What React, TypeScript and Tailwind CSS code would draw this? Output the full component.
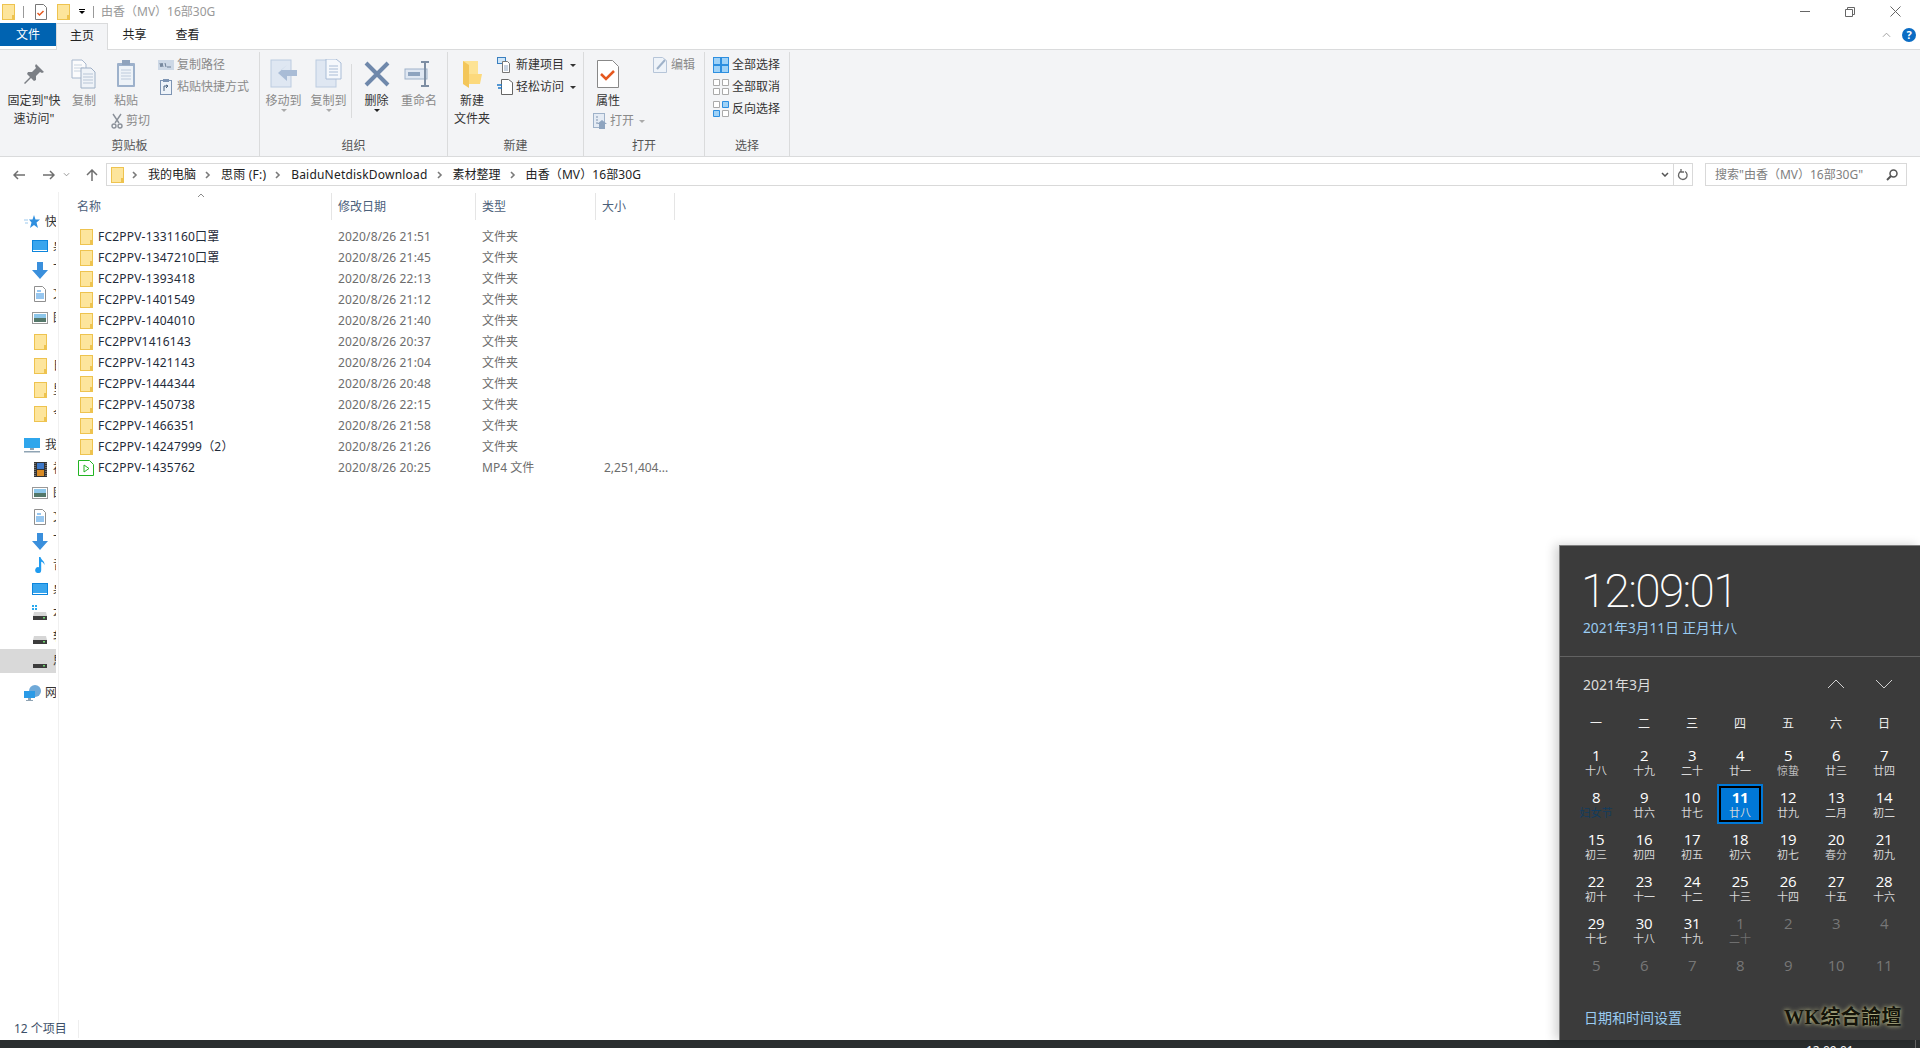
// App.tsx
import React from 'react';

const FONT = 'font-["Noto_Sans","Noto_Sans_CJK_SC",sans-serif]';

function Folder({ className = 'w-[13px] h-[16px] shrink-0' }: { className?: string }) {
  return (
    <svg viewBox="0 0 13 16" className={className}>
      <rect x="0.5" y="0.5" width="12" height="15" fill="#fde59c" stroke="#eec34f" />
      <rect x="10" y="11" width="3" height="5" fill="#eec34f" />
    </svg>
  );
}

function Chevron() {
  return (
    <svg viewBox="0 0 6 8" className="w-[6px] h-[8px] mx-[3px] shrink-0">
      <path d="M1 1l3 3-3 3" fill="none" stroke="#7a7a7a" strokeWidth="1.6" />
    </svg>
  );
}

function BigButton({ icon, lines, width, gray, caret, darkCaret }: { icon: React.ReactNode; lines: string[]; width: number; gray?: boolean; caret?: boolean; darkCaret?: boolean }) {
  return (
    <div className="flex flex-col items-center shrink-0" style={{ width }}>
      <div className="h-[34px] flex items-center justify-center">{icon}</div>
      <div className={`mt-[1px] text-[12px] leading-[18px] text-center whitespace-nowrap ${gray ? 'text-[#8a8a8a]' : 'text-[#333]'}`}>
        {lines.map((l) => (
          <div key={l}>{l}</div>
        ))}
      </div>
      {caret && <div className={`w-0 h-0 border-x-[3px] border-x-transparent border-t-[3px] -mt-[1px] ${darkCaret ? 'border-t-[#222]' : 'border-t-[#aaa]'}`} />}
    </div>
  );
}

function SmallButton({ icon, label, gray, caret, tight }: { icon: React.ReactNode; label: string; gray?: boolean; caret?: boolean; tight?: boolean }) {
  return (
    <div className={`flex items-center h-[22px] whitespace-nowrap ${tight ? 'gap-[2px]' : 'gap-[3px]'}`}>
      <div className="w-[16px] h-[16px] flex items-center justify-center shrink-0">{icon}</div>
      <span className={`text-[12px] ${gray ? 'text-[#8a8a8a]' : 'text-[#333]'}`}>{label}</span>
      {caret && <div className={`ml-[3px] w-0 h-0 border-x-[3px] border-x-transparent border-t-[3px] ${gray ? 'border-t-[#aaa]' : 'border-t-[#333]'}`} />}
    </div>
  );
}

function Group({ label, width, children }: { label: string; width: number; children: React.ReactNode }) {
  return (
    <div className="flex flex-col shrink-0 border-r border-[#dadbdc] h-[104px] mt-[2px]" style={{ width }}>
      <div className="flex-1 flex items-start pt-[5px]">{children}</div>
      <div className="h-[20px] pt-[1px] text-center text-[12px] leading-[18px] text-[#555]">{label}</div>
    </div>
  );
}

const PageIcon = () => (
  <svg viewBox="0 0 26 30" width={26} height={30} opacity={0.7}>
    <path d="M1 1h10l4 4v14H1z" fill="#fff" stroke="#8aa0bd" />
    <path d="M3 6h8M3 9h10M3 12h10" stroke="#b8c6d8" />
    <path d="M10 9h10l4 4v16H10z" fill="#eef3f9" stroke="#7d94b3" />
    <path d="M12 15h10M12 18h10M12 21h10M12 24h10" stroke="#9fb2c9" />
  </svg>
);

const folders: [string, string][] = [
  ['FC2PPV-1331160口罩', '21:51'],
  ['FC2PPV-1347210口罩', '21:45'],
  ['FC2PPV-1393418', '22:13'],
  ['FC2PPV-1401549', '21:12'],
  ['FC2PPV-1404010', '21:40'],
  ['FC2PPV1416143', '20:37'],
  ['FC2PPV-1421143', '21:04'],
  ['FC2PPV-1444344', '20:48'],
  ['FC2PPV-1450738', '22:15'],
  ['FC2PPV-1466351', '21:58'],
  ['FC2PPV-14247999（2）', '21:26'],
];

const Drive = ({ badge }: { badge?: boolean }) => (
  <svg viewBox="0 0 16 16" width="16" height="16">
    {badge && <path d="M0 0h2v2H0zM3 0h2v2H3zM0 3h2v2H0zM3 3h2v2H3z" fill="#29a8ee" />}
    <path d="M2 7h12l1 4H1z" fill="#d6d6d6" />
    <rect x="1" y="11" width="14" height="4" fill="#3c3c3c" />
    <rect x="11" y="12" width="2" height="1.5" fill="#6fd66f" />
  </svg>
);
const DesktopIcon = () => (
  <svg viewBox="0 0 16 12" width="16" height="12"><rect width="16" height="12" fill="#0c85dc" /><rect x="1" y="1" width="14" height="9" fill="#3aa6ee" /><rect x="1" y="10" width="14" height="1" fill="#fff" /></svg>
);
const DownIcon = () => (
  <svg viewBox="0 0 16 17" width="16" height="17"><path d="M5 0h6v8h5l-8 9-8-9h5z" fill="#3a8fdc" /></svg>
);
const DocIcon = () => (
  <svg viewBox="0 0 12 16" width="12" height="16"><path d="M.5.5h8l3 3v12H.5z" fill="#fff" stroke="#8f8f8f" /><path d="M3 5h4M2 8h8M2 10h8M2 12h8" stroke="#2f8ee0" /></svg>
);
const PicIcon = () => (
  <svg viewBox="0 0 16 12" width="16" height="12"><rect x=".5" y=".5" width="15" height="11" fill="#fff" stroke="#999" /><rect x="2" y="2" width="12" height="4" fill="#8cc6ea" /><rect x="2" y="6" width="12" height="4" fill="#54786a" /></svg>
);
const PcIcon = () => (
  <svg viewBox="0 0 16 15" width="16" height="15"><rect width="16" height="10" fill="#2fa6ec" /><path d="M6 10h4v2H6z" fill="#8fa4b4" /><rect x="0" y="13" width="16" height="1.5" fill="#8fa4b4" /></svg>
);
const FilmIcon = () => (
  <svg viewBox="0 0 13 15" width="13" height="15"><rect width="13" height="15" fill="#333" /><rect x="3" y="1" width="7" height="6" fill="#3d78c8" /><rect x="3" y="8" width="7" height="6" fill="#d98b25" /><path d="M1 1v13M12 1v13" stroke="#aaa" strokeDasharray="1 1" /></svg>
);
const MusicIcon = () => (
  <svg viewBox="0 0 12 16" width="12" height="16"><path d="M5 0h1.500c.5 3 4.500 4 4 8-.6-2-2-3-3.300-3.200V13a3 3 0 1 1-2.200-2.800z" fill="#1f9bf0" /></svg>
);
const NetIcon = () => (
  <svg viewBox="0 0 17 16" width="17" height="16" className="shrink-0"><circle cx="11" cy="6" r="6" fill="#6fa9d8" /><rect x="0" y="6" width="11" height="7" fill="#2a9ae6" /><path d="M4 13h3v2H4z" fill="#8fa4b4" /><rect x="2" y="15" width="7" height="1" fill="#8fa4b4" /></svg>
);

type NavItem = { icon: React.ReactNode; text: string; top?: boolean; selected?: boolean };
const navQuick: NavItem[] = [
  { icon: <svg viewBox="0 0 16 14" width="16" height="14"><path d="M10 0l1.500 4.500H16l-3.500 3 1.500 5.500-4-3-4 3 1.500-5.500L5 4.500h3.500z" fill="#2f8fdf" /><path d="M0 5h4M1 8h3" stroke="#9cc9ee" /></svg>, text: '快速访问', top: true },
  { icon: <DesktopIcon />, text: '桌面' },
  { icon: <DownIcon />, text: '下载' },
  { icon: <DocIcon />, text: '文档' },
  { icon: <PicIcon />, text: '图片' },
  { icon: <Folder />, text: '' },
  { icon: <Folder />, text: '日' },
  { icon: <Folder />, text: '里' },
  { icon: <Folder />, text: '今' },
];
const navPc: NavItem[] = [
  { icon: <PcIcon />, text: '我的电脑', top: true },
  { icon: <FilmIcon />, text: '视频' },
  { icon: <PicIcon />, text: '图片' },
  { icon: <DocIcon />, text: '文档' },
  { icon: <DownIcon />, text: '下载' },
  { icon: <MusicIcon />, text: '音乐' },
  { icon: <DesktopIcon />, text: '桌面' },
  { icon: <Drive badge />, text: '本地' },
  { icon: <Drive />, text: '软件' },
  { icon: <Drive />, text: '思雨', selected: true },
];

function NavRow({ item }: { item: NavItem }) {
  return (
    <div className={`h-[24px] shrink-0 flex items-center overflow-hidden whitespace-nowrap ${item.selected ? 'bg-[#d9d9d9]' : ''} ${item.top ? 'pl-[24px]' : 'pl-[32px]'}`}>
      <div className="w-[16px] flex justify-center shrink-0">{item.icon}</div>
      <span className="ml-[5px] text-[12px] text-[#333]">{item.text}</span>
    </div>
  );
}

type Day = { d: number; sub?: string; dim?: boolean; term?: boolean; fest?: boolean; today?: boolean };
const days: Day[] = [
  { d: 1, sub: '十八' }, { d: 2, sub: '十九' }, { d: 3, sub: '二十' }, { d: 4, sub: '廿一' }, { d: 5, sub: '惊蛰', term: true }, { d: 6, sub: '廿三' }, { d: 7, sub: '廿四' },
  { d: 8, sub: '妇女节', fest: true }, { d: 9, sub: '廿六' }, { d: 10, sub: '廿七' }, { d: 11, sub: '廿八', today: true }, { d: 12, sub: '廿九' }, { d: 13, sub: '二月' }, { d: 14, sub: '初二' },
  { d: 15, sub: '初三' }, { d: 16, sub: '初四' }, { d: 17, sub: '初五' }, { d: 18, sub: '初六' }, { d: 19, sub: '初七' }, { d: 20, sub: '春分', term: true }, { d: 21, sub: '初九' },
  { d: 22, sub: '初十' }, { d: 23, sub: '十一' }, { d: 24, sub: '十二' }, { d: 25, sub: '十三' }, { d: 26, sub: '十四' }, { d: 27, sub: '十五' }, { d: 28, sub: '十六' },
  { d: 29, sub: '十七' }, { d: 30, sub: '十八' }, { d: 31, sub: '十九' }, { d: 1, sub: '二十', dim: true }, { d: 2, dim: true }, { d: 3, dim: true }, { d: 4, dim: true },
  { d: 5, dim: true }, { d: 6, dim: true }, { d: 7, dim: true }, { d: 8, dim: true }, { d: 9, dim: true }, { d: 10, dim: true }, { d: 11, dim: true },
];

function DayCell({ day }: { day: Day }) {
  const subColor = day.fest ? 'text-[#123c5e]' : day.dim ? 'text-[#6f6f6f]' : day.term ? 'text-[#bdbdbd]' : 'text-[#d8d8d8]';
  return (
    <div className="h-[42px] flex items-center justify-center">
      <div className={`w-[46px] h-[40px] flex flex-col items-center justify-center ${day.today ? 'bg-[#0078d7] border-2 border-[#0078d7] outline-2 outline-black -outline-offset-4' : ''}`}>
        <div className={`text-[15px] leading-[17px] font-["Open_Sans",sans-serif] tracking-[-0.4px] ${day.today ? 'font-bold text-white' : day.dim ? 'text-[#777]' : 'text-white'}`}>{day.d}</div>
        <div className={`h-[13px] text-[11px] leading-[13px] whitespace-nowrap ${subColor}`}>{day.sub}</div>
      </div>
    </div>
  );
}

export default function App() {
  return (
    <div className={`relative w-[1920px] h-[1048px] overflow-hidden bg-white flex flex-col ${FONT}`}>
      {/* title bar */}
      <div className="h-[23px] flex items-center shrink-0 pl-[2px]">
        <Folder />
        <div className="ml-[8px] w-px h-[12px] bg-[#999]" />
        <svg viewBox="0 0 12 16" width="12" height="16" className="ml-[11px]">
          <path d="M.5.5h8l3 3v12H.5z" fill="#fff" stroke="#777" />
          <path d="M2.500 9l2 2 4-4" fill="none" stroke="#e5581f" strokeWidth="1.500" />
        </svg>
        <div className="ml-[10px]"><Folder /></div>
        <div className="ml-[9px] flex flex-col items-center gap-[1px]">
          <div className="w-[6px] h-px bg-black" />
          <div className="w-0 h-0 border-x-[3px] border-x-transparent border-t-[3px] border-t-black" />
        </div>
        <div className="ml-[8px] w-px h-[12px] bg-[#999]" />
        <span className="ml-[7px] text-[12px] text-[#999]">由香（MV）16部30G</span>
        <div className="ml-auto flex items-center">
          <div className="w-[10px] h-px bg-[#666]" />
          <svg viewBox="0 0 10 10" width="10" height="10" className="ml-[35px]"><path d="M2.500 2.500V.5h7v7h-2M.5 2.500h7v7h-7z" fill="none" stroke="#666" /></svg>
          <svg viewBox="0 0 11 11" width="11" height="11" className="ml-[35px] mr-[19px]"><path d="M.5.5l10 10M10.500.5l-10 10" stroke="#666" /></svg>
        </div>
      </div>

      {/* tabs */}
      <div className="h-[27px] flex shrink-0 relative z-10 text-[12px]">
        <div className="w-[56px] h-[23px] bg-[#0063b1] text-white flex items-center justify-center">文件</div>
        <div className="w-[52px] h-[27px] bg-[#f3f4f6] border border-b-0 border-[#dadbdc] flex items-center justify-center text-[#222] pb-[3px]">主页</div>
        <div className="w-[53px] h-[23px] flex items-center justify-center text-[#222]">共享</div>
        <div className="w-[53px] h-[23px] flex items-center justify-center text-[#222]">查看</div>
        <div className="ml-auto flex items-center h-[24px] pr-[4px]">
          <svg viewBox="0 0 10 6" width="9" height="6"><path d="M1 5l4-4 4 4" fill="none" stroke="#999" /></svg>
          <div className="ml-[11px] w-[14px] h-[14px] rounded-full bg-[#0a6cc4] text-white text-[11px] font-bold leading-[14px] text-center">?</div>
        </div>
      </div>

      {/* ribbon */}
      <div className="h-[108px] shrink-0 -mt-px bg-[#f3f4f6] border-y border-[#dadbdc] flex items-start">
        <Group label="剪贴板" width={260}>
          <BigButton
            width={68}
            lines={['固定到"快', '速访问"']}
            icon={<svg viewBox="0 0 22 22" width="22" height="22"><path d="M13 1l8 8-2 1-2-1-4 4 0 4-2 1-3-3-6 6-1-1 6-6-3-3 1-2 4 0 4-4-1-2z" fill="#7b7f85" /></svg>}
          />
          <div className="-ml-[2px]"><BigButton width={36} gray lines={['复制']} icon={<PageIcon />} /></div>
          <div className="ml-[1px] flex flex-col w-[46px]">
            <BigButton
              width={46}
              gray
              lines={['粘贴']}
              icon={<svg viewBox="0 0 20 28" width="20" height="28" opacity="0.85"><rect x="1" y="3" width="18" height="24" rx="1" fill="#8fa6c4" /><rect x="3" y="6" width="14" height="19" fill="#eef3f9" /><rect x="6" y="0" width="8" height="5" fill="#7d94b3" /><path d="M5 10h10M5 13h10M5 16h10M5 19h10" stroke="#b6c5d8" /></svg>}
            />
            <div className="flex items-center gap-[3px] mt-[2px] ml-[8px] whitespace-nowrap">
              <svg viewBox="0 0 12 16" width="12" height="16" className="shrink-0"><path d="M2 1l6 9M10 1L4 10" stroke="#8a9099" strokeWidth="1.400" /><circle cx="3" cy="13" r="2" fill="none" stroke="#8a9099" strokeWidth="1.400" /><circle cx="9" cy="13" r="2" fill="none" stroke="#8a9099" strokeWidth="1.400" /></svg>
              <span className="text-[12px] text-[#8a8a8a]">剪切</span>
            </div>
          </div>
          <div className="flex flex-col -mt-[3px] ml-[9px]">
            <SmallButton gray label="复制路径" icon={<svg viewBox="0 0 16 10" width="16" height="10"><rect width="16" height="10" fill="#cdd8e6" /><path d="M2 3l1 4 1-4 1 4M7 3l1 4M9 7h4" stroke="#6d7f96" fill="none" /></svg>} />
            <SmallButton gray label="粘贴快捷方式" icon={<svg viewBox="0 0 12 16" width="12" height="16"><rect x=".5" y="1.500" width="11" height="14" fill="#eef3f9" stroke="#7d94b3" /><rect x="3" y="0" width="6" height="3" fill="#7d94b3" /><path d="M4 12V7h4M6 6l2 1-2 2" stroke="#47607f" fill="none" /></svg>} />
          </div>
        </Group>

        <Group label="组织" width={188}>
          <div className="ml-[1px] flex">
            <BigButton width={45} gray caret lines={['移动到']} icon={<svg viewBox="0 0 28 30" width="28" height="30"><rect x="1" y="1" width="20" height="27" fill="#dfe7f2" stroke="#bccbe0" /><path d="M10 14h16v6H16v5l-9-8 9-8z" fill="#a9bcd6" transform="translate(1 -3)" /></svg>} />
            <BigButton width={45} gray caret lines={['复制到']} icon={<svg viewBox="0 0 28 30" width="28" height="30"><rect x="1" y="1" width="20" height="27" fill="#dfe7f2" stroke="#bccbe0" /><path d="M11 0h10l5 4v16H11z" fill="#f5f8fc" stroke="#a9bcd6" /><path d="M14 7h9M14 10h9M14 13h9M14 16h9" stroke="#a9bcd6" /></svg>} />
            <div className="w-px h-[54px] bg-[#dadbdc] mt-[7px]" />
            <div className="ml-[2px]"><BigButton width={45} caret darkCaret lines={['删除']} icon={<svg viewBox="0 0 26 26" width="26" height="26"><path d="M2 2l22 22M24 2L2 24" stroke="#6f88ab" strokeWidth="4" /></svg>} /></div>
            <BigButton width={40} lines={['重命名']} gray icon={<svg viewBox="0 0 30 26" width="30" height="26"><rect x="1" y="8" width="22" height="10" fill="#dfe7f2" stroke="#9fb2c9" /><rect x="4" y="11" width="12" height="4" fill="#8ea4bf" /><path d="M21 1v24M17 1h8M17 25h8" stroke="#7e8ea3" strokeWidth="2" /></svg>} />
          </div>
        </Group>

        <Group label="新建" width={136}>
          <BigButton width={48} lines={['新建', '文件夹']} icon={<svg viewBox="0 0 20 28" width="20" height="28"><path d="M1 1h15v23H6z" fill="#fde394" /><path d="M1 1l6 4v23l-6-4z" fill="#f3c65a" /><path d="M7 14h13l-2 10H7z" fill="#fcd97c" /></svg>} />
          <div className="flex flex-col -mt-[3px] ml-[1px]">
            <SmallButton caret label="新建项目" icon={<svg viewBox="0 0 16 16" width="16" height="16"><rect x=".5" y=".5" width="8" height="6" fill="#cfe6f8" stroke="#3a7fbf" /><path d="M5.500 4.500h5l2 2v9h-7z" fill="#fff" stroke="#777" /><path d="M7 9h4M7 11h4M7 13h4" stroke="#8fa6c4" /></svg>} />
            <SmallButton caret label="轻松访问" icon={<svg viewBox="0 0 16 16" width="16" height="16"><path d="M4.500.5h7l4 3v12h-11z" fill="#fff" stroke="#666" /><path d="M0 6h5M1 9h4" stroke="#1f78c8" strokeWidth="1.500" /></svg>} />
          </div>
        </Group>

        <Group label="打开" width={121}>
          <div className="flex flex-col items-start pl-[4px] w-[78px]">
            <BigButton width={40} lines={['属性']} icon={<svg viewBox="0 0 22 28" width="22" height="28"><path d="M.5.5h15l6 6v21H.5z" fill="#fff" stroke="#888" /><path d="M4 14l5 5 8-8" fill="none" stroke="#e5581f" strokeWidth="2.500" /></svg>} />
            <div className="ml-[4px]"><SmallButton gray tight caret label="打开" icon={<svg viewBox="0 0 14 16" width="14" height="16"><rect x=".5" y=".5" width="11" height="14" fill="#e4ebf4" stroke="#9fb2c9" /><path d="M3 4h2M3 7h2M3 10h2" stroke="#7e93ae" /><path d="M6 16v-5H4l5-4 5 4h-2v5z" fill="#8ea4bf" /></svg>} /></div>
          </div>
          <div className="-mt-[3px] -ml-[10px]">
            <SmallButton gray label="编辑" icon={<svg viewBox="0 0 14 16" width="14" height="16"><path d="M.5.5h9l4 3v12H.5z" fill="#eef3f9" stroke="#b6c5d8" /><path d="M4 12l8-9" stroke="#9fb2c9" strokeWidth="2" /></svg>} />
          </div>
        </Group>

        <Group label="选择" width={85}>
          <div className="flex flex-col -mt-[3px] pl-[8px]">
            <SmallButton label="全部选择" icon={<svg viewBox="0 0 16 16" width="16" height="16"><rect width="16" height="16" fill="#2d8fe0" /><path d="M1 1h6v6H1zM9 1h6v6H9zM1 9h6v6H1zM9 9h6v6H9z" fill="#9fd2f7" /></svg>} />
            <SmallButton label="全部取消" icon={<svg viewBox="0 0 16 16" width="16" height="16"><path d="M.5.5h6v6h-6zM9.500.5h6v6h-6zM.5 9.500h6v6h-6zM9.500 9.500h6v6h-6z" fill="#fff" stroke="#aaa" /></svg>} />
            <SmallButton label="反向选择" icon={<svg viewBox="0 0 16 16" width="16" height="16"><path d="M.5.5h6v6h-6zM9.500 9.500h6v6h-6z" fill="#fff" stroke="#aaa" /><path d="M9.500.5h6v6h-6zM.5 9.500h6v6h-6z" fill="#9fd2f7" stroke="#2d8fe0" /></svg>} />
          </div>
        </Group>
      </div>

      {/* address bar */}
      <div className="h-[35px] shrink-0 flex items-center relative">
        <div className="w-[106px] shrink-0 flex items-center pl-[13px] text-[#7d7d7d]">
          <svg viewBox="0 0 12 10" width="12" height="10"><path d="M12 5H1M5 1L1 5l4 4" fill="none" stroke="#6f6f6f" strokeWidth="1.500" /></svg>
          <svg viewBox="0 0 12 10" width="12" height="10" className="ml-[18px]"><path d="M0 5h11M7 1l4 4-4 4" fill="none" stroke="#6f6f6f" strokeWidth="1.500" /></svg>
          <svg viewBox="0 0 8 5" width="7" height="5" className="ml-[8px]"><path d="M1 1l3 3 3-3" fill="none" stroke="#8a8a8a" /></svg>
          <svg viewBox="0 0 12 12" width="12" height="12" className="ml-[16px]"><path d="M6 12V1M1 6l5-5 5 5" fill="none" stroke="#6f6f6f" strokeWidth="1.500" /></svg>
        </div>
        <div className="w-[1587px] h-[23px] border border-[#d9d9d9] flex items-center text-[12px] text-[#222] whitespace-nowrap">
          <div className="ml-[4px] mr-[5px] flex"><Folder /></div>
          <Chevron />
          <span className="ml-[7px] mr-[6px]">我的电脑</span>
          <Chevron />
          <span className="ml-[7px] mr-[6px] tracking-[0.2px]">思雨 (F:)</span>
          <Chevron />
          <span className="ml-[7px] mr-[6px] tracking-[0.2px]">BaiduNetdiskDownload</span>
          <Chevron />
          <span className="ml-[7px] mr-[6px]">素材整理</span>
          <Chevron />
          <span className="ml-[7px] tracking-[0.1px]">由香（MV）16部30G</span>
          <div className="ml-auto flex items-center h-full">
            <svg viewBox="0 0 8 5" width="8" height="5" className="mr-[4px]"><path d="M1 1l3 3 3-3" fill="none" stroke="#555" strokeWidth="1.500" /></svg>
            <div className="w-px h-full bg-[#d9d9d9]" />
            <svg viewBox="0 0 12 12" width="12" height="12" className="mx-[3px]"><path d="M8 2.500a4.300 4.300 0 1 1-3.500-.4M4 0v3h3" fill="none" stroke="#666" strokeWidth="1.300" /></svg>
          </div>
        </div>
        <div className="ml-[12px] w-[202px] h-[23px] border border-[#d9d9d9] flex items-center pl-[9px] text-[12px] text-[#808080] whitespace-nowrap">
          搜索"由香（MV）16部30G"
          <svg viewBox="0 0 12 12" width="12" height="12" className="ml-auto mr-[8px]"><circle cx="7.500" cy="4.500" r="3.500" fill="none" stroke="#555" strokeWidth="1.500" /><path d="M5 7l-4 4" stroke="#555" strokeWidth="2" /></svg>
        </div>
      </div>

      {/* body */}
      <div className="flex-1 flex min-h-0">
        <div className="w-[59px] shrink-0 pr-[3px] flex flex-col">
          <div className="w-[56px] h-full overflow-hidden pt-[18px] flex flex-col">
            {navQuick.map((n, i) => <NavRow key={i} item={n} />)}
            <div className="h-[7px] shrink-0" />
            {navPc.map((n, i) => <NavRow key={i} item={n} />)}
            <div className="h-[8px] shrink-0" />
            <div className="h-[24px] shrink-0 flex items-center pl-[24px] overflow-hidden whitespace-nowrap">
              <NetIcon />
              <span className="ml-[4px] text-[12px] text-[#333]">网络</span>
            </div>
          </div>
        </div>
        <div className="flex-1 border-l border-[#f0f0f0] -ml-[1px] h-[834px]">
          <div className="h-[28px] pt-[1px] flex text-[12px] text-[#4c607a] relative">
            <div className="w-[272px] pl-[18px] flex items-center">名称</div>
            <svg viewBox="0 0 8 5" width="8" height="5" className="absolute left-[138px] top-[1px]"><path d="M1 4l3-3 3 3" fill="none" stroke="#8a8a8a" /></svg>
            <div className="w-[144px] border-l border-[#e5e5e5] pl-[6px] flex items-center">修改日期</div>
            <div className="w-[120px] border-l border-[#e5e5e5] pl-[6px] flex items-center">类型</div>
            <div className="w-[80px] border-x border-[#e5e5e5] pl-[6px] flex items-center">大小</div>
          </div>
          <div className="pt-[7px] text-[12px]">
            {folders.map(([name, time]) => (
              <div key={name} className="h-[20.95px] flex items-center">
                <div className="w-[272px] flex items-center pl-[21px] shrink-0">
                  <Folder />
                  <span className="ml-[5px] text-[#1f2b3a] whitespace-nowrap tracking-[0.2px]">{name}</span>
                </div>
                <div className="w-[144px] pl-[7px] text-[#6d6d6d] shrink-0 tracking-[0.15px]">2020/8/26 {time}</div>
                <div className="pl-[7px] text-[#6d6d6d]">文件夹</div>
              </div>
            ))}
            <div className="h-[20.95px] flex items-center">
              <div className="w-[272px] flex items-center pl-[19px] shrink-0">
                <svg viewBox="0 0 16 16" width="16" height="16"><path d="M.5.500h11l4 4v11H.5z" fill="#fff" stroke="#22b422" /><path d="M6 5l5 3.500L6 12z" fill="#fff" stroke="#22b422" /></svg>
                <span className="ml-[4px] text-[#1f2b3a] whitespace-nowrap tracking-[0.2px]">FC2PPV-1435762</span>
              </div>
              <div className="w-[144px] pl-[7px] text-[#6d6d6d] shrink-0 tracking-[0.15px]">2020/8/26 20:25</div>
              <div className="w-[120px] pl-[7px] text-[#6d6d6d] shrink-0">MP4 文件</div>
              <div className="pl-[9px] text-[#6d6d6d] whitespace-nowrap">2,251,404...</div>
            </div>
          </div>
        </div>
      </div>

      {/* status bar */}
      <div className="h-[22px] shrink-0 flex items-center pl-[14px] text-[12px] text-[#3c4f68]">
        <span className="pr-[11px] border-r border-[#eeeeee]">12 个项目</span>
      </div>

      {/* taskbar */}
      <div className="h-[8px] shrink-0 bg-[#2a2e2f] relative overflow-hidden">
        <span className="absolute left-[1806px] top-[4px] text-[12px] leading-[14px] text-white">12:09:01</span>
        <div className="absolute left-[1915px] top-0 w-px h-full bg-[#666]" />
      </div>

      {/* clock flyout */}
      <div className="absolute right-0 bottom-[8px] w-[361px] h-[495px] bg-[#3b3b3b] border-t border-l border-[#7f7f7f] shadow-[-4px_0_10px_rgba(0,0,0,0.18)] flex flex-col">
        <div className="h-[111px] shrink-0 border-b border-[#626262] pl-[21px] pt-[21px]">
          <div className='text-[46px] leading-[48px] font-extralight tracking-[-1.7px] text-white font-["Roboto",sans-serif]'>12:09:01</div>
          <div className="mt-[4px] ml-[2px] text-[13.7px] leading-[18px] text-[#9accf2]">2021年3月11日 正月廿八</div>
        </div>
        <div className="h-[53px] shrink-0 flex items-center pl-[23px] pt-[1px]">
          <span className="text-[14px] text-[#dcdcdc]">2021年3月</span>
          <svg viewBox="0 0 18 10" width="18" height="10" className="ml-[176px]"><path d="M1 9l8-8 8 8" fill="none" stroke="#d0d0d0" /></svg>
          <svg viewBox="0 0 18 10" width="18" height="10" className="ml-[30px]"><path d="M1 1l8 8 8-8" fill="none" stroke="#d0d0d0" /></svg>
        </div>
        <div className="pl-[12px] pr-[12px]">
          <div className="grid grid-cols-7 h-[26px] pt-[2px] items-center text-center text-[12px] text-[#f0f0f0] mb-[5px]">
            {['一', '二', '三', '四', '五', '六', '日'].map((w) => (
              <div key={w}>{w}</div>
            ))}
          </div>
          <div className="grid grid-cols-7">
            {days.map((d, i) => (
              <DayCell key={i} day={d} />
            ))}
          </div>
        </div>
        <div className="flex-1 flex items-center justify-between pl-[24px] pr-[18px] pt-[1px]">
          <span className="text-[14px] text-[#9accf2]">日期和时间设置</span>
          <span className='text-[20px] leading-[24px] tracking-[0.4px] font-bold text-[#14140a] [text-shadow:0_0_4px_#e0e0a0] font-["Liberation_Serif","Noto_Sans_CJK_TC",serif]'>WK综合論壇</span>
        </div>
      </div>
    </div>
  );
}
